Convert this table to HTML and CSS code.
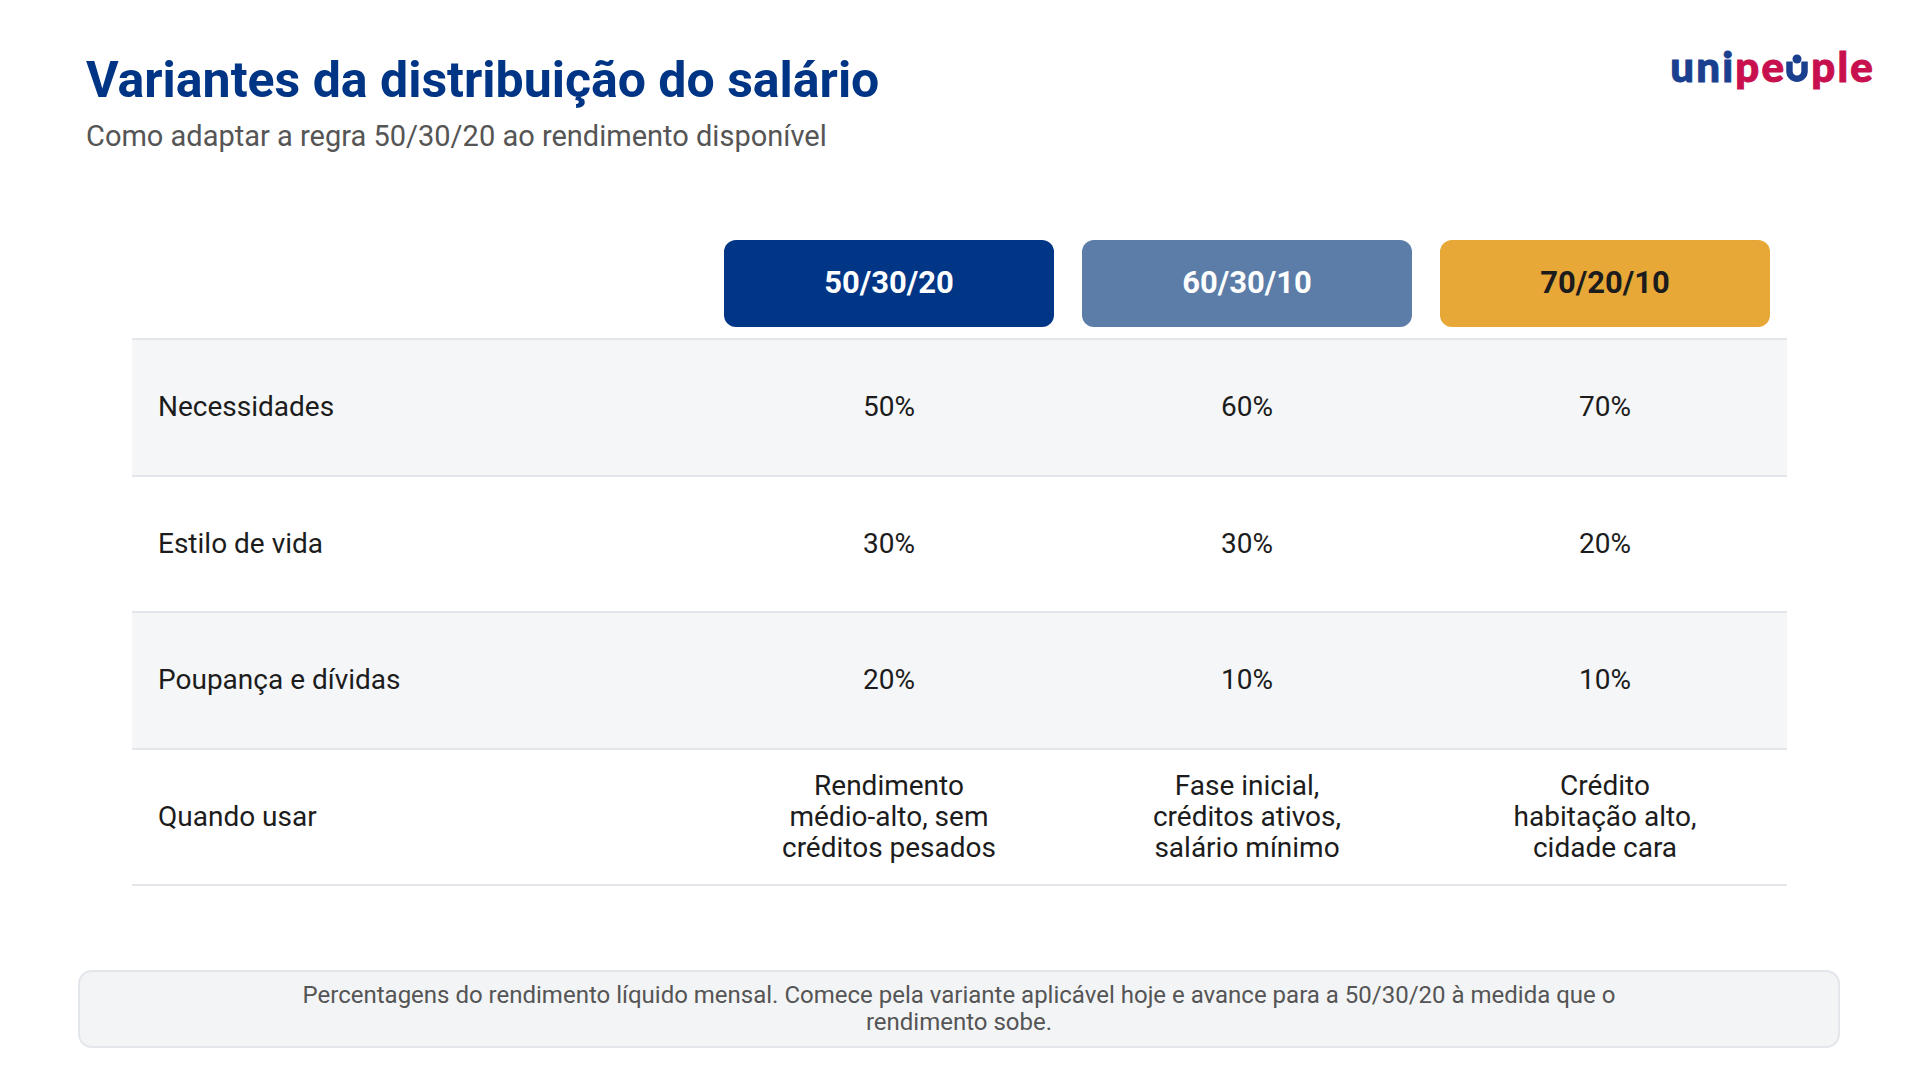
FILE: index.html
```html
<!DOCTYPE html>
<html lang="pt">
<head>
<meta charset="utf-8">
<title>Variantes da distribuição do salário</title>
<link rel="stylesheet" href="styles.css">
</head>
<body>
<div class="page">
  <header class="top">
    <div class="titles">
      <h1 class="title">Variantes da distribuição do salário</h1>
      <p class="subtitle">Como adaptar a regra 50/30/20 ao rendimento disponível</p>
    </div>
    <div class="logo" aria-label="unipeople"><span class="lb">uni</span><span class="lp">pe</span><svg class="smile" viewBox="0 0 20 26" aria-hidden="true"><path d="M3 7 V16 A7 7 0 0 0 17 16 V7" fill="none" stroke="#1b3f8f" stroke-width="6"/><circle cx="10" cy="4.6" r="4.2" fill="#1b3f8f"/></svg><span class="lp">ple</span></div>
  </header>

  <section class="table">
    <div class="row head">
      <div class="cell label"></div>
      <div class="cell"><div class="pill p1">50/30/20</div></div>
      <div class="cell"><div class="pill p2">60/30/10</div></div>
      <div class="cell"><div class="pill p3">70/20/10</div></div>
    </div>
    <div class="row shade">
      <div class="cell label">Necessidades</div>
      <div class="cell val">50%</div>
      <div class="cell val">60%</div>
      <div class="cell val">70%</div>
    </div>
    <div class="row">
      <div class="cell label">Estilo de vida</div>
      <div class="cell val">30%</div>
      <div class="cell val">30%</div>
      <div class="cell val">20%</div>
    </div>
    <div class="row shade">
      <div class="cell label">Poupança e dívidas</div>
      <div class="cell val">20%</div>
      <div class="cell val">10%</div>
      <div class="cell val">10%</div>
    </div>
    <div class="row">
      <div class="cell label">Quando usar</div>
      <div class="cell val"><span class="txt">Rendimento médio-alto, sem créditos pesados</span></div>
      <div class="cell val"><span class="txt">Fase inicial, créditos ativos, salário mínimo</span></div>
      <div class="cell val"><span class="txt">Crédito habitação alto, cidade cara</span></div>
    </div>
  </section>

  <footer class="note">
    <p>Percentagens do rendimento líquido mensal. Comece pela variante aplicável hoje e avance para a 50/30/20 à medida que o rendimento sobe.</p>
  </footer>
</div>
</body>
</html>
```

FILE: styles.css
```css
* { box-sizing: border-box; }
html, body { margin: 0; padding: 0; }
body {
  width: 1920px;
  height: 1080px;
  background: #ffffff;
  font-family: Roboto, "Liberation Sans", sans-serif;
  color: #1c1c1c;
  overflow: hidden;
}
.page { width: 1920px; height: 1080px; }

.top {
  display: flex;
  justify-content: space-between;
  align-items: flex-start;
  padding: 50px 45px 0 86px;
}
.title {
  margin: 0;
  font-size: 50px;
  line-height: 60px;
  font-weight: 700;
  color: #003586;
}
.subtitle {
  margin: 9px 0 0;
  font-size: 29px;
  line-height: 34px;
  color: #555555;
}
.logo {
  margin-top: -5px;
  font-family: Lato, "Open Sans", sans-serif;
  font-weight: 900;
  font-size: 42px;
  line-height: 42px;
  letter-spacing: 2.2px;
  -webkit-text-stroke: 1px currentColor;
  white-space: nowrap;
}
.lb { color: #1b3f8f; }
.lp { color: #c8104f; }
.smile {
  width: 22px;
  height: 28px;
  margin: 0 3px 0 0;
  vertical-align: baseline;
}

.table {
  margin: 87px 133px 0 132px;
}
.row {
  display: grid;
  grid-template-columns: 578px repeat(3, 358px);
  height: 136.5px;
  border-bottom: 2px solid #e3e6eb;
}
.row.head {
  height: 100px;
  align-items: start;
}
.row.shade { background: #f5f6f8; }
.cell {
  display: flex;
  align-items: center;
  justify-content: center;
  font-size: 28px;
  line-height: 31px;
  padding-bottom: 1px;
}
.row.head .cell { padding: 0 14px; }
.cell.label {
  justify-content: flex-start;
  padding-left: 26px;
}
.txt {
  display: block;
  width: 217px;
  text-align: center;
}

.pill {
  width: 100%;
  height: 87px;
  padding-bottom: 3px;
  border-radius: 12px;
  display: flex;
  align-items: center;
  justify-content: center;
  font-size: 31px;
  font-weight: 700;
  color: #ffffff;
}
.p1 { background: #013686; }
.p2 { background: #5b7da8; }
.p3 { background: #e8a838; color: #1c1c1c; }

.note {
  margin: 84px 80px 0 78px;
  height: 78px;
  background: #f3f4f6;
  border: 2px solid #e3e6eb;
  border-radius: 14px;
  display: flex;
  align-items: center;
  justify-content: center;
}
.note p {
  margin: 0;
  max-width: 1340px;
  text-align: center;
  font-size: 24px;
  line-height: 27px;
  color: #555555;
}
```
